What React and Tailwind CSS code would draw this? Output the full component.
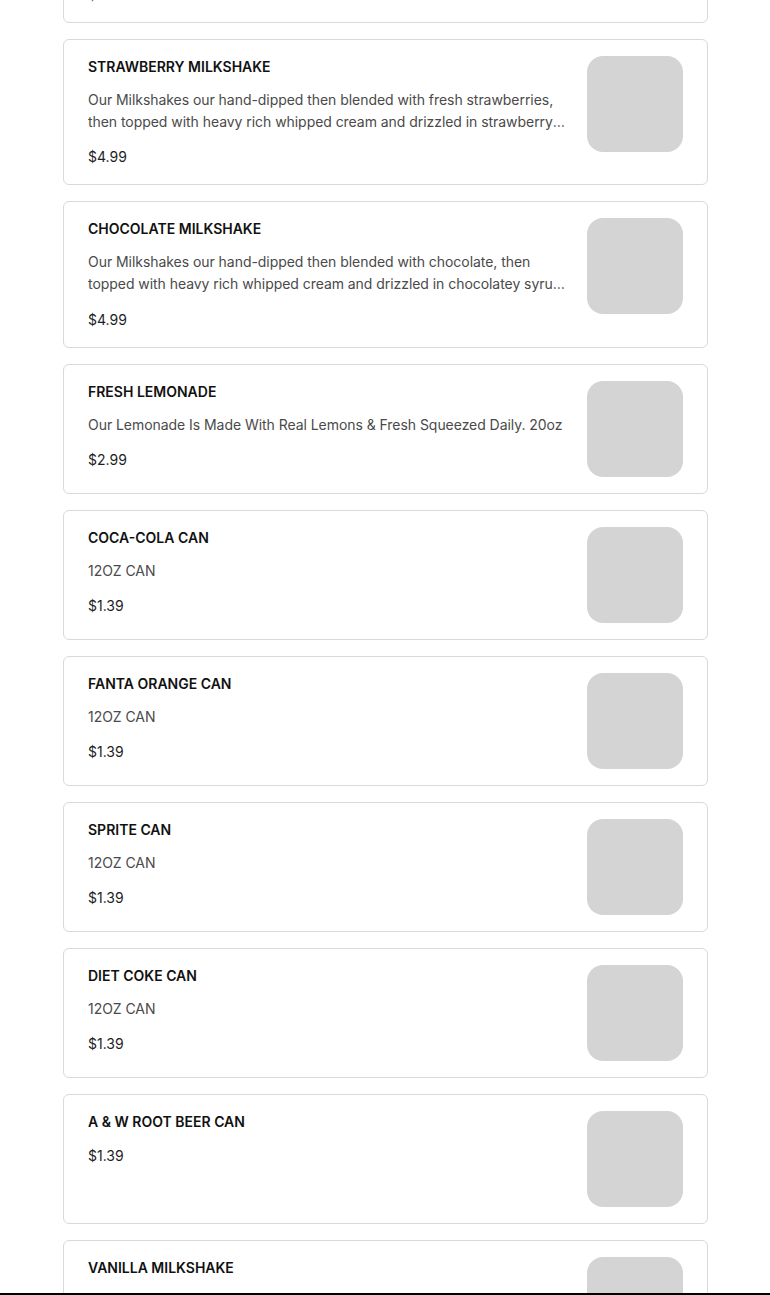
import React from "react";

const items = [
  {
    name: "Cookies & Cream Milkshake",
    desc: "Our Milkshakes our hand-dipped then blended with crushed cookies, then topped with heavy rich whipped cream and drizzled in chocolatey syrup.",
    price: "$4.99",
  },
  {
    name: "Strawberry Milkshake",
    desc: "Our Milkshakes our hand-dipped then blended with fresh strawberries, then topped with heavy rich whipped cream and drizzled in strawberry syrup.",
    price: "$4.99",
  },
  {
    name: "Chocolate Milkshake",
    desc: "Our Milkshakes our hand-dipped then blended with chocolate, then topped with heavy rich whipped cream and drizzled in chocolatey syrup with a cherry on top.",
    price: "$4.99",
  },
  {
    name: "Fresh Lemonade",
    desc: "Our Lemonade Is Made With Real Lemons & Fresh Squeezed Daily. 20oz",
    price: "$2.99",
  },
  { name: "Coca-Cola Can", desc: "12OZ CAN", price: "$1.39" },
  { name: "Fanta Orange Can", desc: "12OZ CAN", price: "$1.39" },
  { name: "Sprite Can", desc: "12OZ CAN", price: "$1.39" },
  { name: "Diet Coke Can", desc: "12OZ CAN", price: "$1.39" },
  { name: "A & W Root Beer Can", desc: null, price: "$1.39" },
  {
    name: "Vanilla Milkshake",
    desc: "Our Milkshakes our hand-dipped then blended with vanilla ice cream, then topped with heavy rich whipped cream.",
    price: "$4.99",
  },
];

const MenuCard = ({ item }) => (
  <div className="flex gap-5 rounded-md border border-[#d9d9d9] bg-white px-6 py-4">
    <div className="flex min-w-0 flex-1 flex-col pt-px pb-px">
      <h3 className="text-sm leading-5 font-semibold uppercase text-[#111]">
        {item.name}
      </h3>
      {item.desc && (
        <p className="mt-3 line-clamp-2 text-sm leading-[22px] tracking-[-0.05px] text-[#4a4a4a]">
          {item.desc}
        </p>
      )}
      <span className="mt-[14.5px] text-sm leading-5 text-[#1f1f1f]">
        {item.price}
      </span>
    </div>
    <div className="h-24 w-24 shrink-0 rounded-2xl bg-[#d4d4d4]" />
  </div>
);

export default function App() {
  return (
    <div
      className="min-h-screen bg-white"
      style={{ fontFamily: "Inter, 'Noto Sans', sans-serif" }}
    >
      <div className="-mt-[124px] flex flex-col gap-4 pl-[63px] pr-[62px] pb-10">
        {items.map((item) => (
          <MenuCard key={item.name} item={item} />
        ))}
      </div>
      <div className="fixed bottom-0 left-0 right-0 h-[2px] bg-black" />
    </div>
  );
}
